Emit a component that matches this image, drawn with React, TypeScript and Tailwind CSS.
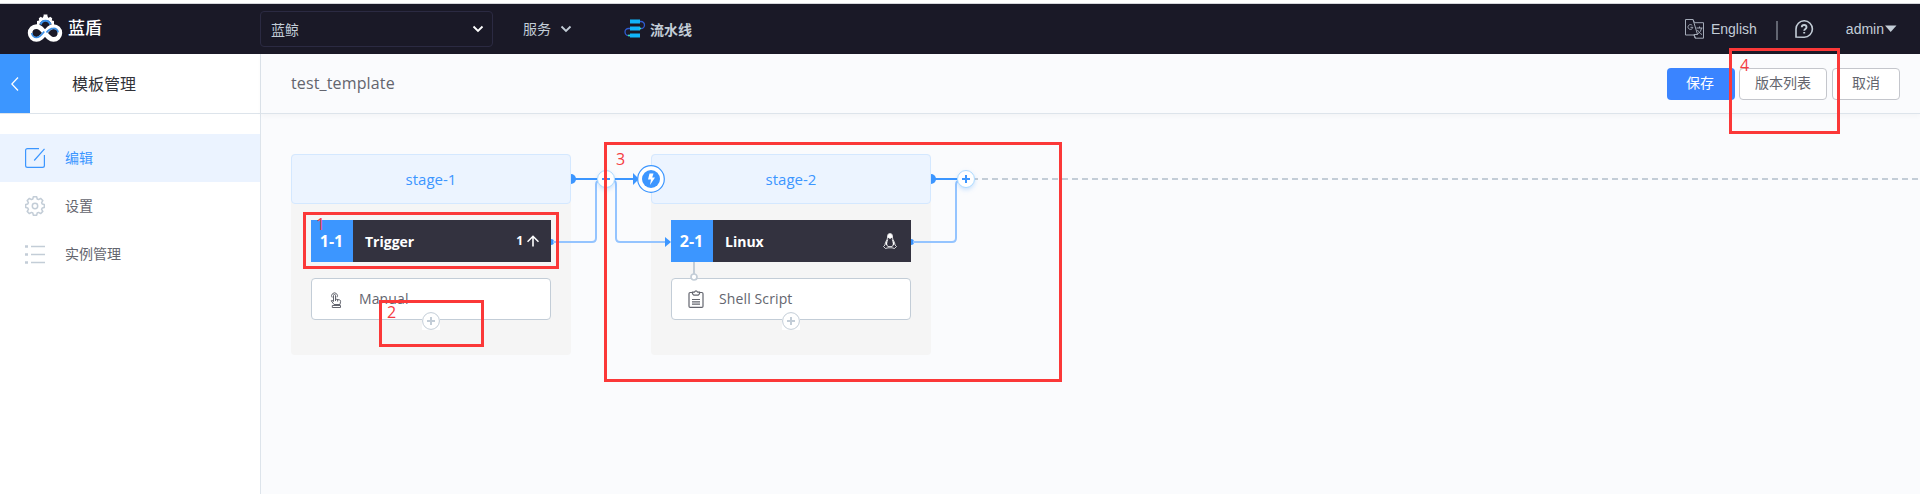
import React from "react";

const uiFont = "font-['Open_Sans','Noto_Sans_CJK_SC',sans-serif]";

function Logo() {
  return (
    <svg width="36" height="30" viewBox="0 0 36 30" className="block">
      <path d="M10 11V7l2.200-.6-.4-2.200 2-1.500 1.700 1.200L16.600 2V.4h3.800V2l1.100 1.900 1.700-1.200 2 1.500-.4 2.200 2.200.6v4z" fill="#fff" />
      <path d="M12.200 11.500c1-7.500 11.600-7.500 12.600 0L18.500 17z" fill="#1a1927" />
      <path d="M13.500 10.500c2-5 8-5 10 0" fill="none" stroke="#3a8ee6" strokeWidth="2.200" />
      <path d="M18 19C15 15 13 12.600 9.500 12.600a6.400 6.400 0 0 0 0 12.800C13 25.400 15 23 18 19s5-6.400 8.500-6.400a6.400 6.400 0 0 1 0 12.800C23 25.400 21 23 18 19z" fill="none" stroke="#fff" strokeWidth="4.600" />
      <path d="M4.800 19a4.700 4.700 0 0 0 4.700 4.500C13 23.500 14.500 21 17.200 17.500M19.500 18.500c2-2.700 4-4.200 7-4.200a4.500 4.500 0 0 1 4.600 4" fill="none" stroke="#3a8ee6" strokeWidth="1.700" />
    </svg>
  );
}

function Chevron({ color }: { color: string }) {
  return (
    <svg width="12" height="8" viewBox="0 0 12 8" className="block">
      <path d="M1.500 1.500 6 6l4.500-4.500" fill="none" stroke={color} strokeWidth="1.800" />
    </svg>
  );
}

function PipelineIcon() {
  return (
    <svg width="22" height="20" viewBox="0 0 22 20" className="block">
      <path d="M16 2.500h1a3.400 3.400 0 0 1 0 7h-1M6 9.500H4.500a3.400 3.400 0 0 0 0 7H6" fill="none" stroke="#2f5bd0" strokeWidth="1.300" />
      <path d="M6 .5h10v4H6zM6 7.500h10v4H6zM6 14.500h10v4H6z" fill="#10b5fb" />
      <path d="M15.500 9.500h1.500M4 16.500h2" stroke="#3be8b0" strokeWidth="1.500" />
    </svg>
  );
}

function TopBar() {
  return (
    <header className="flex h-[54px] shrink-0 flex-col bg-white">
      <div className="h-1 border-b border-[#d5d6db]" />
      <div className="flex h-[50px] items-center bg-[#1a1927] text-[14px] text-[#c3cdd7]">
        <div className="flex w-[260px] items-center pl-[27px]">
          <Logo />
          <span className="ml-[5px] -mt-0.5 text-[17px] font-medium leading-6 text-white">蓝盾</span>
        </div>
        <div className="flex h-9 w-[233px] items-center justify-between rounded-sm border border-[#2b2a42] pl-[10px] pr-[8px]">
          <span>蓝鲸</span>
          <Chevron color="#ffffff" />
        </div>
        <div className="ml-[30px] flex items-center gap-[9px]">
          <span className="-mt-0.5">服务</span>
          <Chevron color="#c3cdd7" />
        </div>
        <div className="ml-[52px] flex items-center gap-1">
          <PipelineIcon />
          <span className="font-bold">流水线</span>
        </div>
        <div className="ml-auto flex items-center font-['Liberation_Sans',sans-serif]">
          <svg width="22" height="20" viewBox="0 0 22 20" className="block">
            <path d="M1.500.5H9l1.500 3.200h9v15.500h-8.500L10 16H1.500V.5M9 .500 13.500 15.500H10l1.500 3.500" fill="none" stroke="#a4abb8" />
            <path d="M8.300 6.500A2.400 2.400 0 1 0 8.800 8.300H6.500M12.500 9h6M15.500 7.500V9m2 0c-.5 3-2 5-4.500 6.500m.5-4.500c1 2 2.500 3.500 4.500 4.500" fill="none" stroke="#a4abb8" />
          </svg>
          <span className="ml-[5px]">English</span>
          <i className="ml-[19px] mt-0.5 h-[19px] w-0.5 bg-[#626571]" />
          <svg width="20" height="20" viewBox="0 0 20 20" className="ml-[16px] block">
            <path d="M2 18V10a8.200 8.200 0 1 1 8.200 8.200z" fill="none" stroke="#c3cdd7" strokeWidth="1.600" />
            <path d="M7.800 8.200c0-3 4.700-3 4.700 0 0 1.700-2.300 1.700-2.300 3.600M10.200 13v1.600" fill="none" stroke="#c3cdd7" strokeWidth="1.900" />
          </svg>
          <span className="ml-[32px]">admin</span>
          <svg width="12" height="8" viewBox="0 0 12 8" className="ml-px mr-[23px] block"><path d="M0 .5h11.500L5.700 7z" fill="#c3cdd7" /></svg>
        </div>
      </div>
    </header>
  );
}

function EditIcon() {
  return (
    <svg width="20" height="20" viewBox="0 0 20 20" className="block" fill="none" stroke="#3c96ff" strokeWidth="1.200">
      <path d="M14 .6H2.500Q.6.600.6 2.500v15q0 1.900 1.900 1.900h15q1.900 0 1.900-1.900V7M19.500.8 9.200 12.500" />
    </svg>
  );
}

function GearIcon() {
  return (
    <svg width="20" height="20" viewBox="0 0 20 20" className="block" fill="none" stroke="#c3cdd7" strokeWidth="1.500" strokeLinejoin="round">
      <path d="M8.300.8h3.400l.5 2.200 1.400.6 2-1.200 2.200 2.200-1.200 2 .6 1.400 2.100.5v3l-2.100.5-.6 1.400 1.200 2-2.200 2.200-2-1.200-1.400.6-.5 2.200H8.300L7.800 17l-1.400-.6-2 1.200-2.200-2.200 1.200-2-.6-1.400-2.100-.5v-3L2.800 8l.6-1.400-1.200-2 2.200-2.200 2 1.200L7.800 3z" />
      <circle cx="10" cy="10" r="2.700" />
    </svg>
  );
}

function ListIcon() {
  return (
    <svg width="20" height="20" viewBox="0 0 20 20" className="block" stroke="#c3cdd7">
      <path d="M6 2.500h14M6 10.500h14M6 18.500h14" strokeWidth="1.400" />
      <path d="M0 2.500h3M0 10.500h3M0 18.500h3" strokeWidth="2.600" />
    </svg>
  );
}

function SideItem({ icon, label, active }: { icon: React.ReactNode; label: string; active?: boolean }) {
  return (
    <li className={active ? "flex h-12 items-center bg-[#ebf3ff] pl-[25px] text-[#3c96ff]" : "flex h-12 items-center pl-[25px] text-[#63656e]"}>
      {icon}
      <span className="-mt-0.5 ml-5 text-[14px]">{label}</span>
    </li>
  );
}

function Sidebar() {
  return (
    <aside className="flex w-[261px] shrink-0 flex-col border-r border-[#dde4eb] bg-white">
      <div className="flex h-[60px] border-b border-[#dde4eb]">
        <div className="flex w-[30px] items-center justify-center bg-[#3c96ff]">
          <svg width="8" height="14" viewBox="0 0 8 14" className="block"><path d="M7 .5.8 7 7 13.500" fill="none" stroke="#fff" strokeWidth="1.300" /></svg>
        </div>
        <span className="ml-[42px] mt-[18px] text-[16px] leading-6 text-[#313238]">模板管理</span>
      </div>
      <ul className="pt-5">
        <SideItem active icon={<EditIcon />} label="编辑" />
        <SideItem icon={<GearIcon />} label="设置" />
        <SideItem icon={<ListIcon />} label="实例管理" />
      </ul>
    </aside>
  );
}

function AddAtom() {
  return (
    <div className="absolute left-[110px] top-[33px] h-[18px] w-[18px] bg-white">
      <svg width="18" height="18" viewBox="0 0 18 18" className="block">
        <circle cx="9" cy="9" r="8.400" fill="#fff" stroke="#c3cdd7" />
        <path d="M5 9h8M9 5v8" stroke="#c3cdd7" strokeWidth="2" />
      </svg>
    </div>
  );
}

type StageProps = {
  name: string;
  index: string;
  job: string;
  status: React.ReactNode;
  icon: React.ReactNode;
  atom: string;
  children?: React.ReactNode;
};

function Stage({ name, index, job, status, icon, atom, children }: StageProps) {
  return (
    <section className="relative h-[201px] w-[280px] shrink-0 rounded-sm bg-[#f5f5f5]">
      <h2 className="flex h-[50px] items-center justify-center rounded-sm border border-[#d4e8ff] bg-[#ecf4ff] text-[15px] text-[#3c96ff]">{name}</h2>
      <div className="px-5 pt-4">
        <div className="flex h-[42px] items-center bg-[#33323f] text-white">
          <span className="flex h-full w-[42px] items-center justify-center bg-[#3c96ff] pr-px text-[16px] font-bold">{index}</span>
          <span className="ml-3 text-[14px] font-bold">{job}</span>
          <span className="ml-auto flex items-center text-[12px] font-bold">{status}</span>
        </div>
        <div className="relative mt-4 flex h-[42px] items-center rounded-sm border border-[#c3cdd7] bg-white text-[14px] text-[#63656e]">
          <span className="flex w-[47px] justify-center">{icon}</span>
          <span className="-mt-0.5 tracking-[0.12px]">{atom}</span>
          <AddAtom />
        </div>
      </div>
      {children}
    </section>
  );
}

function PlusNode() {
  return (
    <svg width="26" height="28" viewBox="0 0 26 28" className="absolute left-[22px] top-3 block overflow-visible">
      <circle cx="13" cy="13" r="8.500" fill="#fff" stroke="#addaff" className="drop-shadow-[0_2px_2px_rgba(60,150,255,0.25)]" />
      <path d="M9 13h8M13 9v8" stroke="#3c96ff" strokeWidth="2" />
    </svg>
  );
}

function Connector({ last }: { last?: boolean }) {
  return (
    <div className="relative h-[201px] w-20 shrink-0">
      <svg width="100" height="110" viewBox="0 0 100 110" className="absolute left-0 top-0 z-10 block overflow-visible">
        <path d="M0 20a5 5 0 0 1 0 10z" fill="#3c96ff" />
        <path d="M-20 85a3 3 0 0 1 0 6z" fill="#3c96ff" />
        <path d="M0 25h26" stroke="#3c96ff" strokeWidth="2" />
        <path d="M-18 88H21Q25 88 25 84V31Q25 27 28 27" fill="none" stroke="#94c4ff" strokeWidth="2" />
        {!last && (
          <>
            <path d="M44 25h20" stroke="#3c96ff" strokeWidth="2" />
            <path d="M62 19l6 6-6 6z" fill="#3c96ff" />
            <path d="M43 27Q45 27 45 31V84Q45 88 49 88H96" fill="none" stroke="#94c4ff" strokeWidth="2" />
            <path d="M94 83l6 5-6 5z" fill="#3c96ff" />
          </>
        )}
      </svg>
      <div className="absolute left-0 top-0 z-10"><PlusNode /></div>
    </div>
  );
}

function ArrowUp() {
  return (
    <svg width="12" height="12" viewBox="0 0 12 12" className="ml-1 mr-3 block"><path d="M6 11.500V1.500M.5 6.800 6 1.300l5.500 5.500" fill="none" stroke="#fff" strokeWidth="1.600" /></svg>
  );
}

function Penguin() {
  return (
    <svg width="14" height="16" viewBox="0 0 14 16" className="mr-[14px] block">
      <path d="M4.500 5V3a2.500 2.500 0 0 1 5 0v2c.3 2 2.500 4 2.500 7l1.500 1.500-2 2-2.500-.7H5l-2.500.7-2-2L2 12c0-3 2.200-5 2.500-7z" fill="none" stroke="#fff" strokeWidth=".8" />
      <path d="M4.800 4.500V3a2.200 2.200 0 0 1 4.400 0v1.500L7 6zM4.500 6 2.500 11l1.300 1.500zM9.500 6l2 5-1.300 1.500z" fill="#fff" />
      <path d="M4.800 6.500c-1.500 3-1.500 5 0 7h4.400c1.500-2 1.500-4 0-7" fill="none" stroke="#fff" strokeWidth=".8" />
    </svg>
  );
}

function HandIcon() {
  return (
    <svg width="12" height="16" viewBox="0 0 12 16" className="mt-px block" fill="none" stroke="#63656e" strokeWidth="1">
      <path d="M3.500 9.500V3.400a1 1 0 0 1 2 0V7l4.300 1q.9.300.8 1.300L10 12.500H4L1.200 8.800Q1.500 7.300 3.500 9.500M2.300 13.500h8.200v2H2.300zM5.500 7v2M7.600 7.500v2" />
      <path d="M2.200 5.500A2.900 2.900 0 1 1 7 5.300" />
    </svg>
  );
}

function ClipboardIcon() {
  return (
    <svg width="16" height="18" viewBox="0 0 16 18" className="block" fill="none" stroke="#63656e" strokeWidth="1.200">
      <path d="M4.500 2.500H2.200Q1 2.500 1 3.700v12.500q0 1.200 1.200 1.200h11.600q1.200 0 1.200-1.200V3.700q0-1.200-1.200-1.200h-2.300" />
      <path d="M4.500 2.200h1.800Q8-.6 9.700 2.200h1.800v1.600l-1.300 1.300H5.800L4.500 3.800zM4 9.500h8M4 11.800h8M4 14.200h8" />
    </svg>
  );
}

function Callout({ className, label, labelClass }: { className: string; label: string; labelClass: string }) {
  return (
    <div className={"pointer-events-none absolute z-30 border-[3px] border-[#fb3838] text-[16px] leading-4 text-[#f53b42] " + className}>
      <span className={"absolute " + labelClass}>{label}</span>
    </div>
  );
}

export default function App() {
  return (
    <div className={"relative flex h-[494px] w-[1920px] flex-col overflow-hidden bg-[#fafbfd] " + uiFont}>
      <TopBar />
      <div className="flex min-h-0 flex-1">
        <Sidebar />
        <main className="flex min-w-0 flex-1 flex-col">
          <div className="flex h-[60px] shrink-0 items-center border-b border-[#dde4eb] pl-[30px] pr-5 shadow-[0_2px_5px_rgba(0,0,0,0.03)]">
            <h1 className="-mt-0.5 text-[16px] tracking-[0.14px] text-[#63656e]">test_template</h1>
            <div className="ml-auto flex text-[14px] text-[#63656e]">
              <button className="h-8 w-[68px] rounded-sm bg-[#3a84ff] pb-0.5 pr-0.5 text-white">保存</button>
              <button className="ml-1 h-8 w-[88px] rounded-sm border border-[#c4c6cc] bg-white pb-0.5">版本列表</button>
              <button className="ml-[5px] h-8 w-[68px] rounded-sm border border-[#c4c6cc] bg-white pb-0.5">取消</button>
            </div>
          </div>
          <div className="flex pl-[30px] pt-10">
            <Stage name="stage-1" index="1-1" job="Trigger" status={<>1<ArrowUp /></>} icon={<HandIcon />} atom="Manual" />
            <Connector />
            <Stage name="stage-2" index="2-1" job="Linux" status={<Penguin />} icon={<ClipboardIcon />} atom="Shell Script">
              <svg width="28" height="28" viewBox="0 0 28 28" className="absolute -left-[14px] top-[11px] z-20 block">
                <circle cx="14" cy="14" r="13.300" fill="#fff" stroke="#3c96ff" strokeWidth="1.200" />
                <circle cx="14" cy="14" r="9" fill="#3c96ff" />
                <path d="M12.500 8.500h4l-1.300 4H18l-5 7.500 1-5.500h-3z" fill="#fff" />
              </svg>
              <svg width="8" height="20" viewBox="0 0 8 20" className="absolute left-[39px] top-[108px] z-10 block">
                <path d="M4 0v12" stroke="#c3cdd7" strokeWidth="2" />
                <circle cx="4" cy="15" r="3" fill="#fff" stroke="#c3cdd7" strokeWidth="1.700" />
              </svg>
            </Stage>
            <Connector last />
            <svg width="945" height="2" viewBox="0 0 945 2" className="-ml-9 mt-6 block shrink-0">
              <path d="M-3 1H945" stroke="#c3cdd7" strokeWidth="2" strokeDasharray="6 4" />
            </svg>
          </div>
        </main>
      </div>
      <Callout className="left-[303px] top-[212px] h-[57px] w-[256px]" label="1" labelClass="left-[10px] top-[1px]" />
      <Callout className="left-[379px] top-[300px] h-[47px] w-[105px]" label="2" labelClass="left-[5px] top-[1px]" />
      <Callout className="left-[604px] top-[142px] h-[240px] w-[458px]" label="3" labelClass="left-[9px] top-[6px]" />
      <Callout className="left-[1729px] top-[48px] h-[86px] w-[111px]" label="4" labelClass="left-[8px] top-[6px]" />
    </div>
  );
}
